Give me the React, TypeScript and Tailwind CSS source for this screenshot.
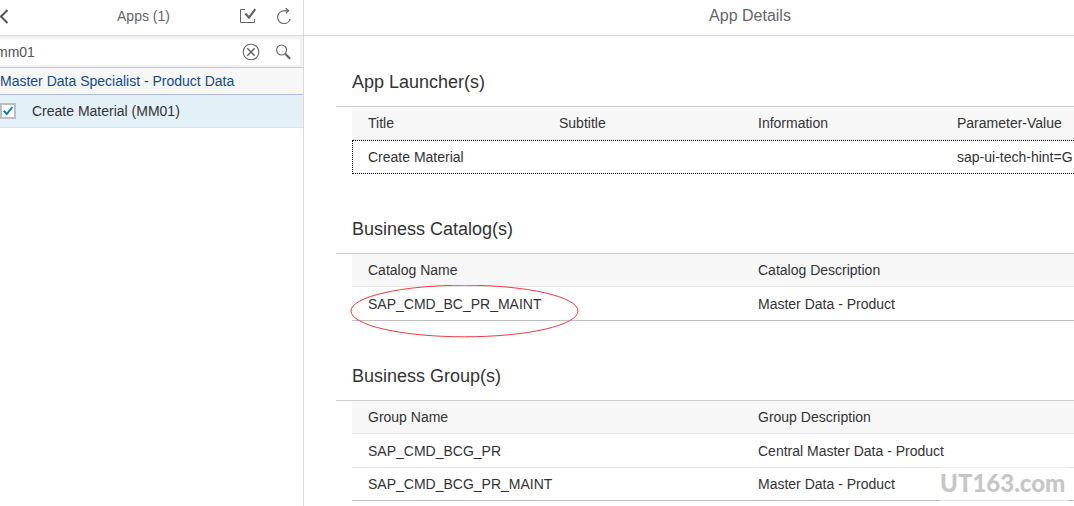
import type { ReactNode } from 'react'
import clsx from 'clsx'

interface Column {
  label: string
  width?: string
}

interface DetailSectionProps {
  title: string
  columns: Column[]
  rows: ReactNode[][]
  focusedRow?: number
}

const launcherColumns: Column[] = [
  { label: 'Title', width: 'w-[199px]' },
  { label: 'Subtitle', width: 'w-[199px]' },
  { label: 'Information', width: 'w-[199px]' },
  { label: 'Parameter-Value' },
]

const catalogColumns: Column[] = [
  { label: 'Catalog Name', width: 'w-[398px]' },
  { label: 'Catalog Description' },
]

const groupColumns: Column[] = [
  { label: 'Group Name', width: 'w-[398px]' },
  { label: 'Group Description' },
]

export default function App() {
  return (
    <div className="relative flex min-h-screen overflow-hidden bg-white font-['Liberation_Sans',Arial,sans-serif] text-sm text-[#333333]">
      <AppList />
      <AppDetails />
      <Watermark />
    </div>
  )
}

// Left pane: search and list of apps
function AppList() {
  return (
    <aside className="-ml-4 w-80 shrink-0 border-r border-[#d9d9d9]">
      <header className="grid h-9 grid-cols-[1fr_auto_1fr] items-center border-b border-[#d9d9d9] px-[11px] pb-[3px] text-[#666666]">
        <button type="button" aria-label="Back" className="justify-self-start">
          <svg width="16" height="16" viewBox="0 0 16 16" fill="none" stroke="#555" strokeWidth="2">
            <path d="M12.5 2 6 8.5l6.5 6.5" />
          </svg>
        </button>
        <h2>Apps (1)</h2>
        <div className="flex gap-5 justify-self-end">
          <button type="button" aria-label="Select all">
            <svg width="16" height="16" viewBox="0 0 16 16" fill="none" stroke="#666">
              <path d="M5 1.5H.5v13h14V11" />
              <path d="m5.3 5.5 3.7 4 6.3-8.3" strokeWidth="2.2" />
            </svg>
          </button>
          <button type="button" aria-label="Refresh">
            <svg width="16" height="16" viewBox="0 0 16 16" fill="none" stroke="#666" strokeWidth="1.2">
              <path d="M12.3 2.8H7.4a6.4 6.4 0 1 0 6.8 8.2" />
              <path d="m9.8.2 2.8 2.6-2.8 2.6" />
            </svg>
          </button>
        </div>
      </header>

      <form className="border-b border-[#cccccc] bg-[#f2f2f2] pt-[3px] pr-[3px] pb-[2px] pl-2" onSubmit={(e) => e.preventDefault()}>
        <div className="flex h-[26px] items-center gap-4 bg-white pr-2 pl-1">
          <input
            type="text"
            aria-label="Search apps"
            defaultValue="mm01"
            className="min-w-0 flex-1 text-[#555555] outline-none"
          />
          <button type="reset" aria-label="Clear search">
            <svg width="18" height="18" viewBox="0 0 18 18" fill="none" stroke="#666">
              <circle cx="9" cy="9" r="7.8" strokeWidth="1.1" />
              <path d="m5.3 5.3 7.4 7.4m0-7.4-7.4 7.4" strokeWidth="1.5" />
            </svg>
          </button>
          <button type="submit" aria-label="Search">
            <svg width="16" height="16" viewBox="0 0 16 16" fill="none" stroke="#666">
              <circle cx="5.6" cy="6" r="5" strokeWidth="1.1" />
              <path d="m9.2 9.7 4.9 5" strokeWidth="2.2" />
            </svg>
          </button>
        </div>
      </form>

      <h3 className="h-[27px] border-b border-[#a3bfdb] bg-[#f7f7f7] pl-4 leading-[26px] text-[#0f4b8f]">
        Master Data Specialist - Product Data
      </h3>
      <label className="flex h-[33px] items-center gap-4 border-b border-[#dde6ec] bg-[#e4f0f8] pl-4">
        <span className="grid size-4">
          <input
            type="checkbox"
            defaultChecked
            className="peer col-start-1 row-start-1 size-4 appearance-none border-2 border-[#bfbfbf] bg-white"
          />
          <svg
            className="pointer-events-none invisible col-start-1 row-start-1 peer-checked:visible"
            width="16"
            height="16"
            viewBox="0 0 16 16"
            fill="none"
            stroke="#0a7cc4"
            strokeWidth="2"
          >
            <path d="m3.8 7.8 3 3.2 5.6-7" />
          </svg>
        </span>
        Create Material (MM01)
      </label>
    </aside>
  )
}

// Right pane, wider than a small window and cut off at its edge
function AppDetails() {
  return (
    <main className="min-w-[892px] flex-1">
      <header className="flex h-9 items-center justify-center border-b border-[#d9d9d9] pb-1">
        <h1 className="text-base text-[#666666]">App Details</h1>
      </header>
      <div className="flex flex-col gap-[31px] pt-[22px] pl-8">
        <DetailSection
          title="App Launcher(s)"
          columns={launcherColumns}
          rows={[['Create Material', '', '', 'sap-ui-tech-hint=G']]}
          focusedRow={0}
        />
        <DetailSection
          title="Business Catalog(s)"
          columns={catalogColumns}
          rows={[[<CircledText key="catalog">SAP_CMD_BC_PR_MAINT</CircledText>, 'Master Data - Product']]}
        />
        <DetailSection
          title="Business Group(s)"
          columns={groupColumns}
          rows={[
            ['SAP_CMD_BCG_PR', 'Central Master Data - Product'],
            ['SAP_CMD_BCG_PR_MAINT', 'Master Data - Product'],
          ]}
        />
      </div>
    </main>
  )
}

function DetailSection({ title, columns, rows, focusedRow }: DetailSectionProps) {
  return (
    <section>
      <h2 className="h-[49px] border-b border-[#cccccc] pl-4 text-lg leading-[48px]">{title}</h2>
      <div className="pl-4">
        <table className="w-full table-fixed border-separate border-spacing-0 text-left">
          <thead>
            <tr className="h-[33px] bg-[#f7f7f7]">
              {columns.map((column) => (
                <th
                  key={column.label}
                  className={clsx('border-b border-[#e5e5e5] pl-2 font-normal first:pl-4', column.width)}
                >
                  {column.label}
                </th>
              ))}
            </tr>
          </thead>
          <tbody>
            {rows.map((row, i) => (
              <tr
                key={i}
                className={clsx(
                  'group h-[33px] first:h-[34px]',
                  i === focusedRow && 'outline-1 -outline-offset-1 outline-black outline-dotted'
                )}
              >
                {row.map((cell, j) => (
                  <td
                    key={j}
                    className={clsx(
                      'relative pl-2 first:pl-4',
                      i !== focusedRow && 'border-b border-[#e5e5e5] group-last:border-[#bfbfbf]'
                    )}
                  >
                    {cell}
                  </td>
                ))}
              </tr>
            ))}
          </tbody>
        </table>
      </div>
    </section>
  )
}

// Text with a red ellipse drawn round it
function CircledText({ children }: { children: ReactNode }) {
  return (
    <>
      {children}
      <svg
        className="pointer-events-none absolute -top-0.5 -left-0.5"
        width="229"
        height="54"
        viewBox="0 0 229 54"
        fill="none"
        stroke="#f23c3c"
      >
        <ellipse cx="114.5" cy="26" rx="113.5" ry="25.8" />
      </svg>
    </>
  )
}

function Watermark() {
  return (
    <div className="absolute right-1.5 bottom-0 h-11 w-32 bg-white/50 font-[Lato] text-2xl leading-[42px] font-black text-[#c6c6c6]">
      UT163.com
    </div>
  )
}
